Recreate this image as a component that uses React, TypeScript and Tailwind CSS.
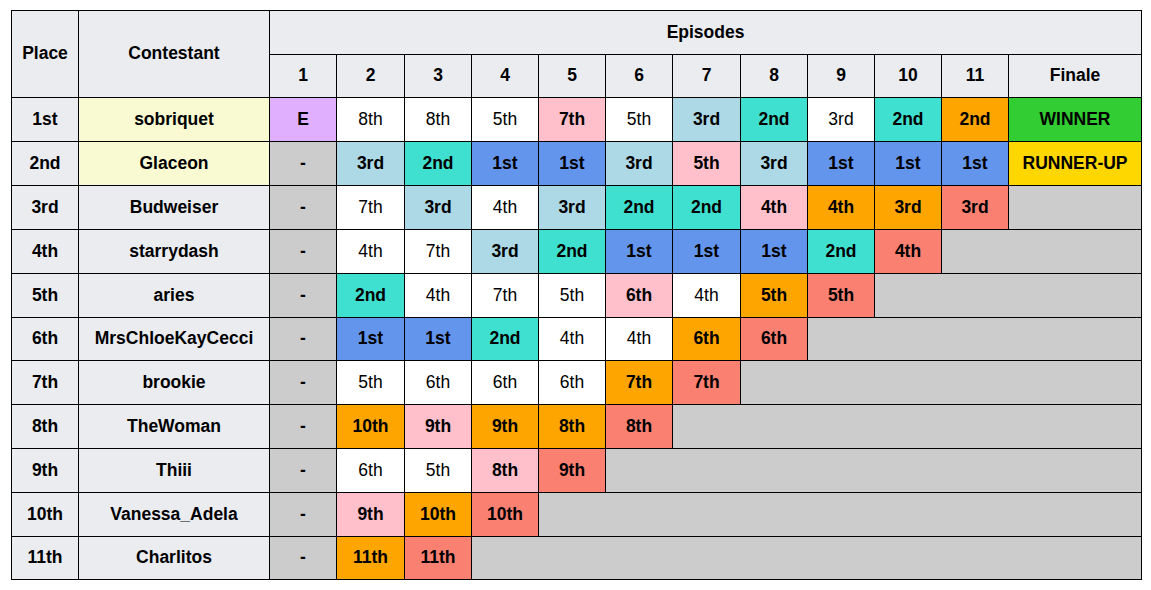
import React from "react"

type Cell = { t: string; c: string; b?: boolean; span?: number }

const W = "bg-white"
const LB = "bg-[#add8e6]"
const TQ = "bg-[#40e0d0]"
const BL = "bg-[#6495ed]"
const PK = "bg-[#ffc0cb]"
const OR = "bg-[#ffa500]"
const SA = "bg-[#fa8072]"
const GR = "bg-[#cccccc]"
const LV = "bg-[#e0b0ff]"

const w = (t: string): Cell => ({ t, c: W })
const lb = (t: string): Cell => ({ t, c: LB, b: true })
const tq = (t: string): Cell => ({ t, c: TQ, b: true })
const bl = (t: string): Cell => ({ t, c: BL, b: true })
const pk = (t: string): Cell => ({ t, c: PK, b: true })
const or = (t: string): Cell => ({ t, c: OR, b: true })
const sa = (t: string): Cell => ({ t, c: SA, b: true })
const dash: Cell = { t: "-", c: GR, b: true }
const out = (span: number): Cell => ({ t: "", c: GR, span })

const rows: { place: string; name: string; top?: boolean; cells: Cell[] }[] = [
  {
    place: "1st",
    name: "sobriquet",
    top: true,
    cells: [
      { t: "E", c: LV, b: true },
      w("8th"), w("8th"), w("5th"), pk("7th"), w("5th"), lb("3rd"), tq("2nd"), w("3rd"), tq("2nd"), or("2nd"),
      { t: "WINNER", c: "bg-[#32cd32]", b: true },
    ],
  },
  {
    place: "2nd",
    name: "Glaceon",
    top: true,
    cells: [
      dash, lb("3rd"), tq("2nd"), bl("1st"), bl("1st"), lb("3rd"), pk("5th"), lb("3rd"), bl("1st"), bl("1st"), bl("1st"),
      { t: "RUNNER-UP", c: "bg-[#ffd700]", b: true },
    ],
  },
  {
    place: "3rd",
    name: "Budweiser",
    cells: [dash, w("7th"), lb("3rd"), w("4th"), lb("3rd"), tq("2nd"), tq("2nd"), pk("4th"), or("4th"), or("3rd"), sa("3rd"), out(1)],
  },
  {
    place: "4th",
    name: "starrydash",
    cells: [dash, w("4th"), w("7th"), lb("3rd"), tq("2nd"), bl("1st"), bl("1st"), bl("1st"), tq("2nd"), sa("4th"), out(2)],
  },
  {
    place: "5th",
    name: "aries",
    cells: [dash, tq("2nd"), w("4th"), w("7th"), w("5th"), pk("6th"), w("4th"), or("5th"), sa("5th"), out(3)],
  },
  {
    place: "6th",
    name: "MrsChloeKayCecci",
    cells: [dash, bl("1st"), bl("1st"), tq("2nd"), w("4th"), w("4th"), or("6th"), sa("6th"), out(4)],
  },
  {
    place: "7th",
    name: "brookie",
    cells: [dash, w("5th"), w("6th"), w("6th"), w("6th"), or("7th"), sa("7th"), out(5)],
  },
  {
    place: "8th",
    name: "TheWoman",
    cells: [dash, or("10th"), pk("9th"), or("9th"), or("8th"), sa("8th"), out(6)],
  },
  {
    place: "9th",
    name: "Thiii",
    cells: [dash, w("6th"), w("5th"), pk("8th"), sa("9th"), out(7)],
  },
  {
    place: "10th",
    name: "Vanessa_Adela",
    cells: [dash, pk("9th"), or("10th"), sa("10th"), out(8)],
  },
  {
    place: "11th",
    name: "Charlitos",
    cells: [dash, or("11th"), sa("11th"), out(9)],
  },
]

const colWidths = [67, 191, 67, 68, 67, 67, 67, 67, 68, 67, 67, 67, 67, 133]
const episodes = ["1", "2", "3", "4", "5", "6", "7", "8", "9", "10", "11", "Finale"]

export default function App() {
  return (
    <div className="w-[1151px] h-[590px] bg-white pt-[10px] pl-[11px] font-['Liberation_Sans',Arial,sans-serif] text-[17.5px] leading-[24px] text-black">
      <table className="table-fixed border-collapse w-[1131px] text-center">
        <colgroup>
          {colWidths.map((cw, i) => (
            <col key={i} style={{ width: cw }} />
          ))}
        </colgroup>
        <thead>
          <tr className="h-[44px]">
            <th rowSpan={2} className="border border-black bg-[#eaecf0] font-bold pb-[2px]">Place</th>
            <th rowSpan={2} className="border border-black bg-[#eaecf0] font-bold pb-[2px]">Contestant</th>
            <th colSpan={12} className="border border-black bg-[#eaecf0] font-bold pb-[2px]">Episodes</th>
          </tr>
          <tr className="h-[43px]">
            {episodes.map((e) => (
              <th key={e} className="border border-black bg-[#eaecf0] font-bold pb-[2px]">{e}</th>
            ))}
          </tr>
        </thead>
        <tbody>
          {rows.map((r, ri) => (
            <tr key={r.name} className={ri === 5 || ri === 10 ? "h-[43px]" : "h-[44px]"}>
              <td className="border border-black bg-[#eaecf0] font-bold pb-[2px]">{r.place}</td>
              <td className={`border border-black font-bold pb-[2px] ${r.top ? "bg-[#fafad2]" : "bg-[#eaecf0]"}`}>{r.name}</td>
              {r.cells.map((c, ci) => (
                <td
                  key={ci}
                  colSpan={c.span}
                  className={`border border-black pb-[2px] ${c.c} ${c.b ? "font-bold" : "font-normal"}`}
                >
                  {c.t}
                </td>
              ))}
            </tr>
          ))}
        </tbody>
      </table>
    </div>
  )
}
